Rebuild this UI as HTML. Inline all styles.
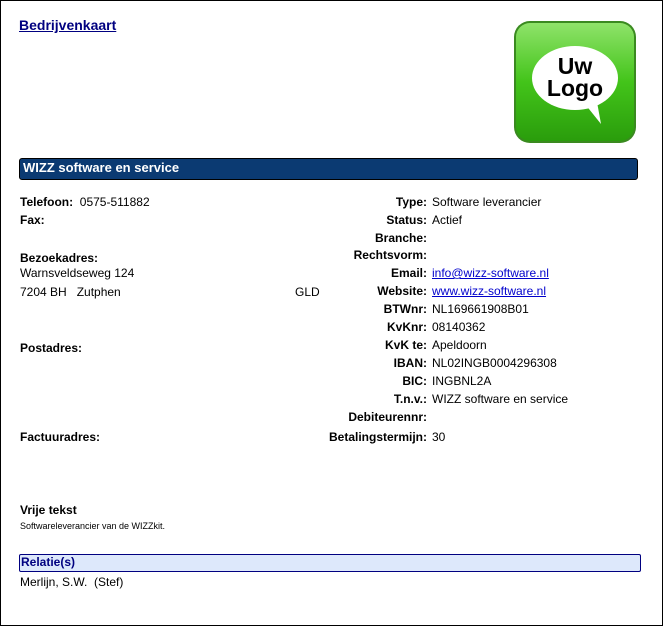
<!DOCTYPE html>
<html><head><style>
body{margin:0;width:664px;height:627px;overflow:hidden;background:#fff;font-family:"Liberation Sans",Arial,sans-serif;font-size:12px;color:#000}
.frame{position:absolute;left:0;top:0;width:661px;height:624px;border:1px solid #000}
.a{position:absolute;white-space:nowrap;line-height:14px}
b{font-weight:bold}
.lab{position:absolute;right:237px;text-align:right;font-weight:bold;white-space:nowrap;line-height:14px}
.val{position:absolute;left:432px;white-space:nowrap;line-height:14px}
a{color:#00c;text-decoration:underline}
</style></head><body>
<div class="frame"></div>
<div class="a" style="left:19px;top:18px;font-size:14px;font-weight:bold;color:#000080;text-decoration:underline">Bedrijvenkaart</div>
<svg style="position:absolute;left:513px;top:20px" width="124" height="124" viewBox="0 0 124 124">
<defs><linearGradient id="g" x1="0" y1="0" x2="0" y2="1"><stop offset="0" stop-color="#8fe36a"/><stop offset="0.5" stop-color="#43c41a"/><stop offset="1" stop-color="#2a9d0c"/></linearGradient></defs>
<rect x="1" y="1" width="122" height="122" rx="16" fill="#3a8a20"/>
<rect x="3" y="3" width="118" height="118" rx="14" fill="url(#g)"/>
<ellipse cx="62" cy="58" rx="43" ry="32" fill="#fff"/>
<path d="M72 84 L88 104 L84 82 Z" fill="#fff"/>
<text x="62" y="54" text-anchor="middle" font-family="Liberation Sans,Arial" font-weight="bold" font-size="23" fill="#000">Uw</text>
<text x="62" y="76" text-anchor="middle" font-family="Liberation Sans,Arial" font-weight="bold" font-size="23" fill="#000">Logo</text>
</svg>
<div style="position:absolute;left:19px;top:158px;width:617px;height:20px;background:#0b3a72;border:1px solid #000;border-radius:3px"></div>
<div class="a" style="left:23px;top:161px;color:#fff;font-weight:bold;font-size:13px">WIZZ software en service</div>

<div class="a" style="left:20px;top:195px"><b>Telefoon:</b>&nbsp; 0575-511882</div>
<div class="a" style="left:20px;top:213px"><b>Fax:</b></div>
<div class="a" style="left:20px;top:251px"><b>Bezoekadres:</b></div>
<div class="a" style="left:20px;top:266px">Warnsveldseweg 124</div>
<div class="a" style="left:20px;top:285px">7204 BH&nbsp;&nbsp; Zutphen</div>
<div class="a" style="left:295px;top:285px">GLD</div>
<div class="a" style="left:20px;top:341px"><b>Postadres:</b></div>
<div class="a" style="left:20px;top:430px"><b>Factuuradres:</b></div>

<div class="lab" style="top:195px">Type:</div><div class="val" style="top:195px">Software leverancier</div>
<div class="lab" style="top:213px">Status:</div><div class="val" style="top:213px">Actief</div>
<div class="lab" style="top:231px">Branche:</div>
<div class="lab" style="top:248px">Rechtsvorm:</div>
<div class="lab" style="top:266px">Email:</div><div class="val" style="top:266px"><a>info@wizz-software.nl</a></div>
<div class="lab" style="top:284px">Website:</div><div class="val" style="top:284px"><a>www.wizz-software.nl</a></div>
<div class="lab" style="top:302px">BTWnr:</div><div class="val" style="top:302px">NL169661908B01</div>
<div class="lab" style="top:320px">KvKnr:</div><div class="val" style="top:320px">08140362</div>
<div class="lab" style="top:338px">KvK te:</div><div class="val" style="top:338px">Apeldoorn</div>
<div class="lab" style="top:356px">IBAN:</div><div class="val" style="top:356px">NL02INGB0004296308</div>
<div class="lab" style="top:374px">BIC:</div><div class="val" style="top:374px">INGBNL2A</div>
<div class="lab" style="top:392px">T.n.v.:</div><div class="val" style="top:392px">WIZZ software en service</div>
<div class="lab" style="top:410px">Debiteurennr:</div>
<div class="lab" style="top:430px">Betalingstermijn:</div><div class="val" style="top:430px">30</div>

<div class="a" style="left:20px;top:503px"><b>Vrije tekst</b></div>
<div class="a" style="left:20px;top:519px;font-size:9px">Softwareleverancier van de WIZZkit.</div>
<div style="position:absolute;left:19px;top:554px;width:620px;height:16px;background:#dde8fb;border:1px solid #000080;border-radius:2px"></div>
<div class="a" style="left:21px;top:555px;color:#000080;font-weight:bold">Relatie(s)</div>
<div class="a" style="left:20px;top:575px">Merlijn, S.W.&nbsp; (Stef)</div>
</body></html>
